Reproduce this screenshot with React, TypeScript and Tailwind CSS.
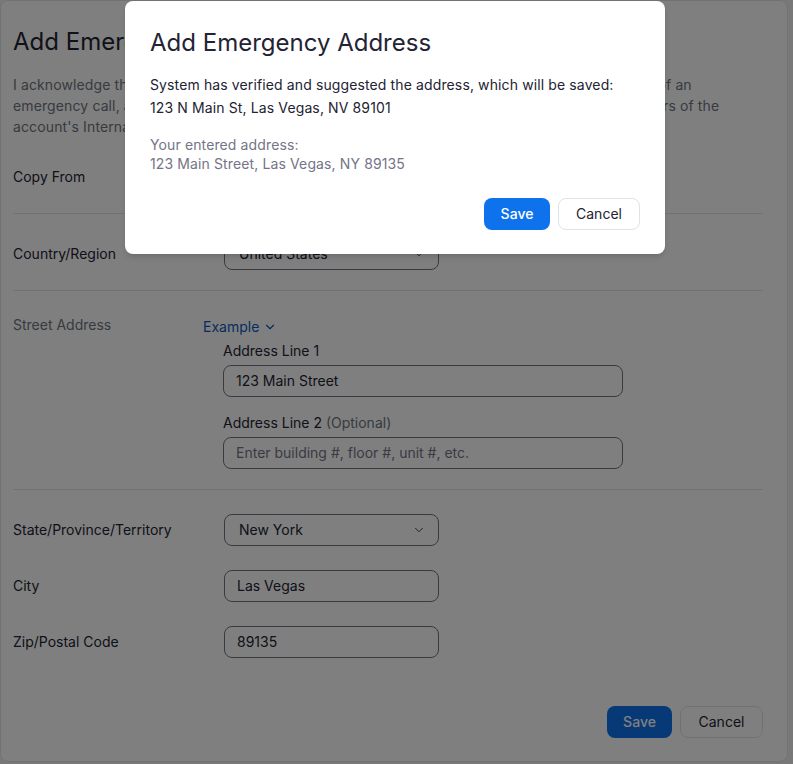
import React from 'react';
import { ChevronDown } from 'lucide-react';

const font = { fontFamily: 'Inter, "Liberation Sans", sans-serif' };

const Select = ({ value }: { value: string }) => (
  <div className="flex h-8 w-[215px] items-center justify-between rounded-lg border border-[#747487] pl-[14px] pr-[12px] text-sm text-[#232333]">
    <span>{value}</span>
    <ChevronDown className="h-[14px] w-[14px] text-[#232333]" strokeWidth={1.5} />
  </div>
);

const Input = ({ value, placeholder, wide }: { value?: string; placeholder?: string; wide?: boolean }) => (
  <div
    className={`flex h-8 items-center rounded-lg border border-[#747487] px-3 text-sm ${wide ? 'w-[400px]' : 'w-[215px]'} ${value ? 'text-[#232333]' : 'text-[#747487]'}`}
  >
    {value || placeholder}
  </div>
);

const Row = ({ label, children }: { label: string; children: React.ReactNode }) => (
  <div className="flex items-center">
    <div className="w-[211px] text-sm text-[#232333]">{label}</div>
    {children}
  </div>
);

export default function App() {
  return (
    <div className="relative h-[764px] w-[793px] overflow-hidden bg-[#f1f1f3]" style={font}>
      {/* page behind the dialog */}
      <div className="h-[762px] w-[788px] rounded-lg border border-[#e4e4ea] bg-white pl-3 pr-6 pt-[25px]">
        <h1 className="text-2xl leading-8 text-[#232333]">Add Emergency Address</h1>
        <p className="mt-4 whitespace-nowrap text-sm leading-[21px] tracking-[0.12px] text-[#6e7680]">
          I acknowledge that this address will be passed to emergency services to locate me in the event of an
          <br />
          emergency call, and that it is my responsibility to keep it up to date and to send it with all members of the
          <br />
          account's International calling plan.
        </p>

        <div className="border-b border-[#e4e4ea] pt-6 pb-5">
          <Row label="Copy From">
            <Select value="Select an address" />
          </Row>
        </div>
        <div className="border-b border-[#e4e4ea] pt-6 pb-5">
          <Row label="Country/Region">
            <Select value="United States" />
          </Row>
        </div>

        <div className="flex border-b border-[#e4e4ea] pt-6 pb-5">
          <div className="w-[190px] text-sm leading-5 text-[#6e7680]">Street Address</div>
          <div className="pt-[2px]">
            <div className="flex items-center gap-1 text-sm leading-5 text-[#0e5ac0]">
              Example
              <ChevronDown className="h-[14px] w-[14px]" strokeWidth={2} />
            </div>
            <div className="pl-[20px]">
              <div className="mt-1 mb-1 text-sm leading-5 text-[#232333]">Address Line 1</div>
              <Input value="123 Main Street" wide />
              <div className="mt-4 mb-1 text-sm leading-5 text-[#232333]">
                Address Line 2 <span className="text-[#6e7680]">(Optional)</span>
              </div>
              <Input placeholder="Enter building #, floor #, unit #, etc." wide />
            </div>
          </div>
        </div>

        <div className="flex flex-col gap-6 pt-6">
          <Row label="State/Province/Territory">
            <Select value="New York" />
          </Row>
          <Row label="City">
            <Input value="Las Vegas" />
          </Row>
          <Row label="Zip/Postal Code">
            <Input value="89135" />
          </Row>
        </div>

        <div className="mt-12 flex justify-end gap-2">
          <button className="h-8 w-[65px] rounded-lg bg-[#0e72ed] text-sm font-medium text-white">Save</button>
          <button className="h-8 w-[83px] rounded-lg border border-[#dfe3e8] bg-white text-sm text-[#232333]">Cancel</button>
        </div>
      </div>

      {/* overlay */}
      <div className="absolute inset-0 bg-black/50" />

      {/* dialog */}
      <div className="absolute left-[125px] top-[1px] h-[253px] w-[540px] rounded-lg bg-white pl-[25px] pr-[25px] pt-[26px] shadow-md">
        <h2 className="text-2xl leading-8 text-[#232333]">Add Emergency Address</h2>
        <p className="mt-4 text-sm leading-5 tracking-[0.12px] text-[#232333]">
          System has verified and suggested the address, which will be saved:
        </p>
        <p className="mt-[3px] text-sm leading-5 tracking-[0.12px] text-[#232333]">123 N Main St, Las Vegas, NV 89101</p>
        <div className="mt-[17px] text-sm leading-[19px] tracking-[0.12px] text-[#747487]">
          <div>Your entered address:</div>
          <div>123 Main Street, Las Vegas, NY 89135</div>
        </div>
        <div className="mt-[25px] flex justify-end gap-2">
          <button className="h-8 w-[66px] rounded-lg bg-[#0e72ed] text-sm font-medium text-white">Save</button>
          <button className="h-8 w-[82px] rounded-lg border border-[#dfe3e8] bg-white text-sm text-[#232333]">Cancel</button>
        </div>
      </div>
    </div>
  );
}
